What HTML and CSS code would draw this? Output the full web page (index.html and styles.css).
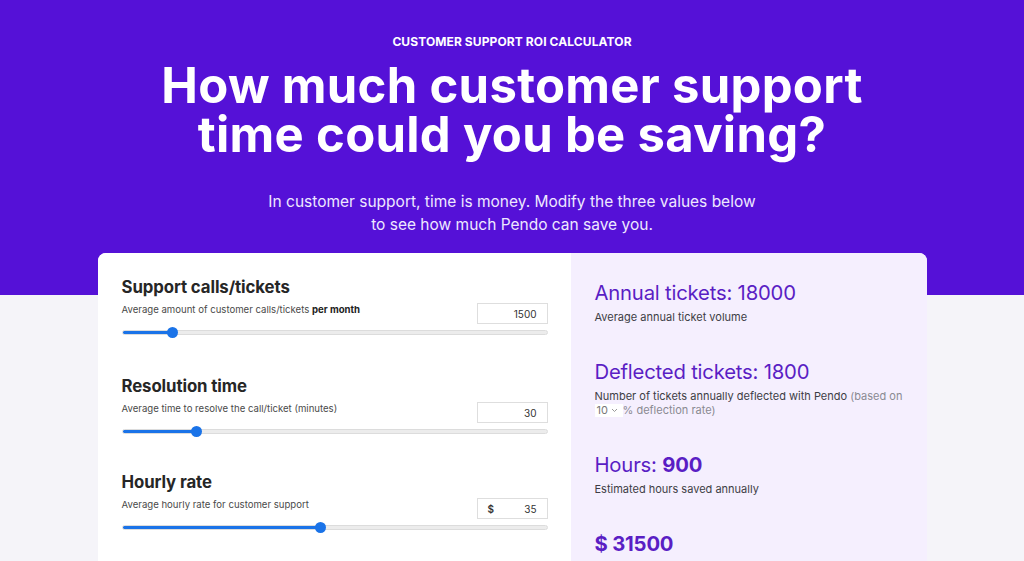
FILE: index.html
```html
<!DOCTYPE html>
<html lang="en">
<head>
    <meta charset="UTF-8">
    <meta name="viewport" content="width=device-width, initial-scale=1.0">
    <title>Customer Support ROI Calculator</title>
    <link rel="stylesheet" href="styles.css">
</head>
<body>
    <header class="hero">
        <p class="eyebrow">CUSTOMER SUPPORT ROI CALCULATOR</p>
        <h1>How much customer support<br>time could you be saving?</h1>
        <p class="lead">In customer support, time is money. Modify the three values below<br>to see how much Pendo can save you.</p>
    </header>

    <main class="calc">
        <div class="inputs">
            <section class="field">
                <h3>Support calls/tickets</h3>
                <div class="field-row">
                    <p>Average amount of customer calls/tickets <b>per month</b></p>
                    <div class="num"><span>1500</span></div>
                </div>
                <input type="range" class="slider" min="0" max="14000" value="1500" style="--fill: 11%">
            </section>

            <section class="field">
                <h3>Resolution time</h3>
                <div class="field-row">
                    <p>Average time to resolve the call/ticket (minutes)</p>
                    <div class="num"><span>30</span></div>
                </div>
                <input type="range" class="slider" min="0" max="180" value="30" style="--fill: 17%">
            </section>

            <section class="field">
                <h3>Hourly rate</h3>
                <div class="field-row">
                    <p>Average hourly rate for customer support</p>
                    <div class="num"><i>$</i><span>35</span></div>
                </div>
                <input type="range" class="slider" min="0" max="75" value="35" style="--fill: 47%">
            </section>
        </div>

        <div class="results">
            <div class="stat">
                <h2>Annual tickets: 18000</h2>
                <p>Average annual ticket volume</p>
            </div>
            <div class="stat">
                <h2>Deflected tickets: 1800</h2>
                <p>Number of tickets annually deflected with Pendo <span class="muted">(based on</span><br><span class="pick">10 <svg width="7" height="5" viewBox="0 0 7 5"><path d="M1 1l2.5 2.5L6 1" fill="none" stroke="#999" stroke-width="1"/></svg></span><span class="muted">% deflection rate)</span></p>
            </div>
            <div class="stat">
                <h2>Hours: <b>900</b></h2>
                <p>Estimated hours saved annually</p>
            </div>
            <div class="stat">
                <h2 class="money"><b>$ 31500</b></h2>
            </div>
        </div>
    </main>
</body>
</html>
```

FILE: styles.css
```css
* {
    margin: 0;
    padding: 0;
    box-sizing: border-box;
}

body {
    font-family: Inter, "Noto Sans", sans-serif;
    background-color: #f5f4f9;
    overflow: hidden;
    height: 561px;
}

.hero {
    background-color: #5511d7;
    color: #fff;
    text-align: center;
    height: 295px;
    padding-top: 35px;
}

.eyebrow {
    font-size: 12px;
    font-weight: 700;
    letter-spacing: 0.1px;
    line-height: 14px;
}

.hero h1 {
    margin-top: 12px;
    font-size: 49px;
    font-weight: 700;
    line-height: 49px;
    letter-spacing: 0.3px;
}

.lead {
    margin-top: 31px;
    font-size: 15.5px;
    line-height: 23px;
    color: #eee8ff;
}

.calc {
    width: 829px;
    margin: -42px auto 0;
    display: flex;
    border-radius: 8px;
    overflow: hidden;
    background-color: #fff;
    min-height: 320px;
}

.inputs {
    width: 473px;
    padding: 24px 23px 0 24px;
    background-color: #fff;
}

.field + .field {
    margin-top: 39px;
}

.field:last-child {
    margin-top: 36px;
}

.field h3 {
    font-size: 16.8px;
    font-weight: 700;
    line-height: 20px;
    color: #262626;
    letter-spacing: -0.1px;
}

.field-row {
    margin-top: 6px;
    display: flex;
    justify-content: space-between;
    align-items: flex-start;
}

.field-row p {
    font-size: 9.6px;
    line-height: 14px;
    color: #4a4a4a;
}

.field-row b {
    font-weight: 700;
    color: #222;
}

.num {
    width: 71px;
    height: 21px;
    border: 1px solid #dedede;
    background-color: #fff;
    display: flex;
    align-items: center;
    padding: 0 10px;
    font-size: 10px;
    color: #333;
}

.num i {
    font-style: normal;
    font-weight: 600;
}

.num span {
    margin-left: auto;
}

.slider {
    -webkit-appearance: none;
    appearance: none;
    display: block;
    width: 100%;
    height: 10px;
    margin-top: 3px;
    background: transparent;
}

.slider::-webkit-slider-runnable-track {
    height: 5px;
    border-radius: 3px;
    border: 1px solid #dcdcdc;
    background: linear-gradient(to right, #1a73e8 var(--fill), #ececec var(--fill));
}

.slider::-webkit-slider-thumb {
    -webkit-appearance: none;
    width: 11px;
    height: 11px;
    border-radius: 50%;
    background-color: #1a73e8;
    margin-top: -4px;
}

.results {
    flex: 1;
    background-color: #f5effe;
    padding: 28px 23px 0 24px;
}

.stat + .stat {
    margin-top: 36px;
}

.stat h2 {
    font-size: 20.3px;
    font-weight: 400;
    line-height: 24px;
    color: #5a1ec4;
    letter-spacing: -0.2px;
}

.stat h2 b {
    font-weight: 700;
}

.stat p {
    margin-top: 5px;
    font-size: 11px;
    line-height: 14px;
    color: #3d3d45;
}

.stat .muted {
    color: #8a8a92;
}

.pick {
    display: inline-flex;
    align-items: center;
    gap: 3px;
    background-color: #fff;
    color: #777;
    padding: 0 2px;
    width: 28px;
    height: 13px;
}
```
